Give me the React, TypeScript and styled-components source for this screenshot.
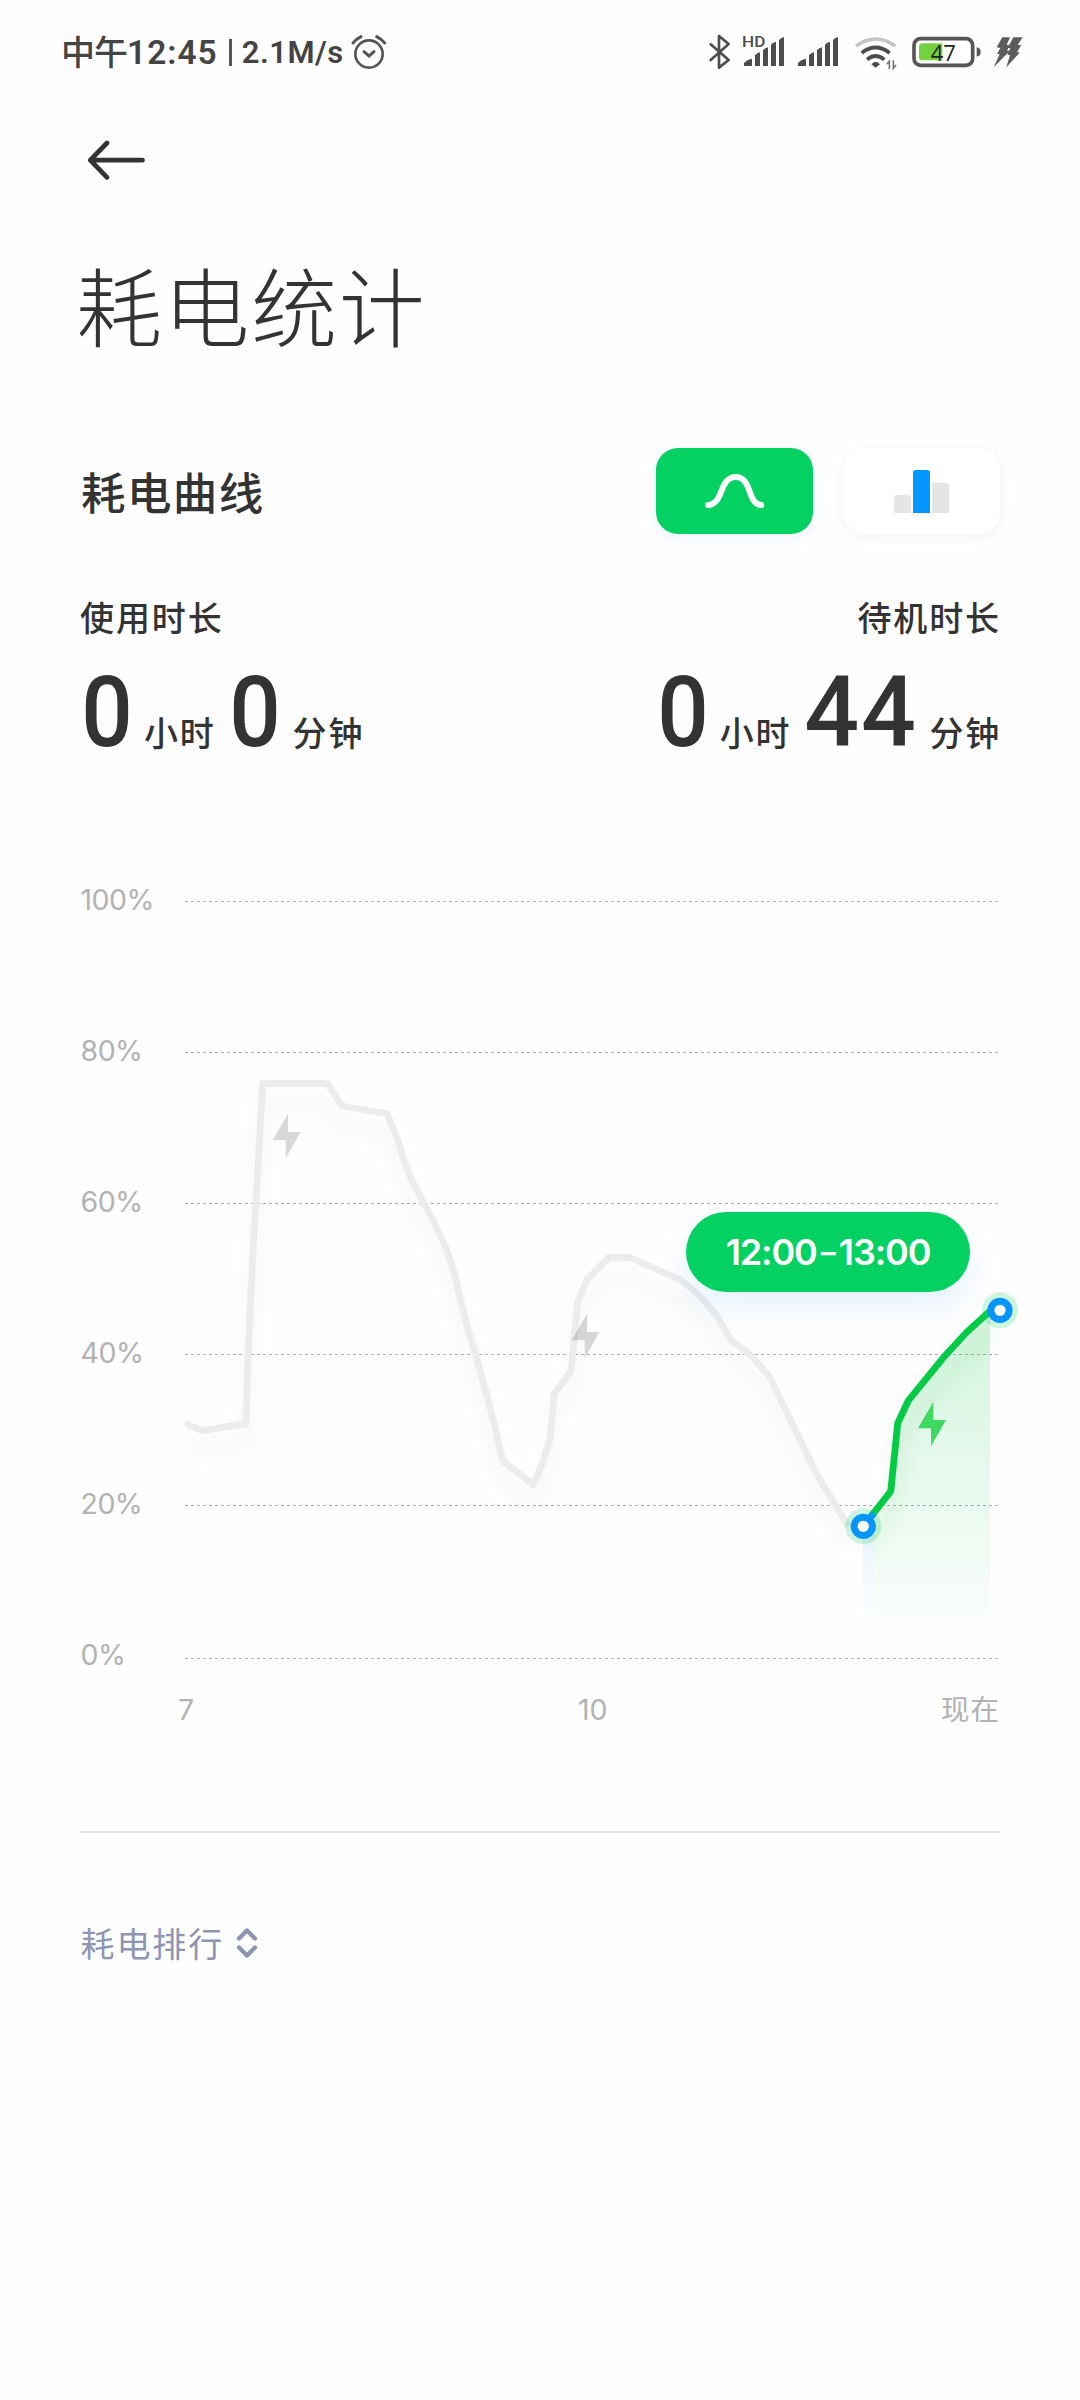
import React from "react";
import styled, { createGlobalStyle } from "styled-components";

const CJK = `"Noto Sans CJK SC", sans-serif`;

const GlobalStyle = createGlobalStyle`
  *, *::before, *::after { box-sizing: border-box; }
  body { margin: 0; background: #fefefe; }
`;

const Screen = styled.main`
  display: flex;
  flex-direction: column;
  width: 1080px;
  height: 2400px;
  overflow: hidden;
  background: #fefefe;
  color: #333;
  font-family: Roboto, ${CJK};
`;

const StatusBar = styled.header`
  display: flex;
  justify-content: space-between;
  height: 104px;
  padding: 34px 57.5px 0 61px;
`;

const StatusGroup = styled.div`
  display: flex;
  align-items: center;
  height: 36px;
  color: #444;
`;

const StatusText = styled.span<{ $size: number; $spacing?: number }>`
  padding-top: 1px;
  font: 600 ${(p) => p.$size}px/36px Roboto, ${CJK};
  letter-spacing: ${(p) => p.$spacing ?? 0}px;
  white-space: nowrap;
`;

const StatusDaypart = styled.span`
  height: 38px;
  font: 500 34px/36px ${CJK};
  letter-spacing: -1px;
`;

const Separator = styled.span`
  width: 3px;
  height: 27px;
  margin: 0 10px 0 11px;
  background: #555;
`;

const Glyph = styled.svg<{ $w: number; $h: number; $ml?: number }>`
  flex: none;
  display: block;
  width: ${(p) => p.$w}px;
  height: ${(p) => p.$h}px;
  margin-left: ${(p) => p.$ml ?? 0}px;
  overflow: visible;
`;

const BackButton = styled.button`
  display: flex;
  align-items: center;
  width: 80px;
  height: 112px;
  margin-left: 87px;
  padding: 0;
  border: 0;
  background: none;
`;

const Title = styled.h1`
  height: 130px;
  margin: 23px 0 0 76px;
  font: 300 86px/130px ${CJK};
  letter-spacing: 1.6px;
`;

const SectionHead = styled.section`
  display: flex;
  align-items: center;
  height: 86px;
  margin: 79px 80px 0;
`;

const SectionTitle = styled.h2`
  flex: 1;
  height: 88px;
  margin: 0;
  padding-left: 1px;
  font: 500 44.5px/88px ${CJK};
  letter-spacing: 1.4px;
`;

const ModeButton = styled.button<{ $active?: boolean }>`
  display: flex;
  align-items: center;
  justify-content: center;
  width: 157px;
  height: 86px;
  margin-left: 30px;
  padding: 0;
  border: 0;
  border-radius: 22px;
  background: ${(p) => (p.$active ? "#03d162" : "#fff")};
  box-shadow: ${(p) =>
    p.$active ? "0 4px 16px rgba(0, 140, 255, 0.08)" : "0 3px 14px rgba(0, 0, 0, 0.05)"};
`;

const Stats = styled.section`
  display: flex;
  justify-content: space-between;
  margin: 58px 80px 0;
`;

const Stat = styled.div<{ $right?: boolean }>`
  display: flex;
  flex-direction: column;
  align-items: ${(p) => (p.$right ? "flex-end" : "flex-start")};
`;

const StatLabel = styled.span`
  height: 50px;
  font: 500 34px/50px ${CJK};
  letter-spacing: 1.9px;
  margin-right: -1px;
`;

const StatValue = styled.div`
  display: flex;
  align-items: baseline;
  height: 108px;
  margin-top: 16px;
`;

const Big = styled.span<{ $ml?: number; $stretch: number; $spacing?: number }>`
  display: inline-block;
  margin-left: ${(p) => p.$ml ?? 0}px;
  font: 500 98.5px/110px Roboto, sans-serif;
  letter-spacing: ${(p) => p.$spacing ?? 0}px;
  transform: scaleX(${(p) => p.$stretch});
`;

const Unit = styled.span<{ $ml?: number }>`
  margin-left: ${(p) => p.$ml ?? 8}px;
  font: 500 34px/50px ${CJK};
  letter-spacing: 1.8px;
  margin-right: -1px;
`;

const Chart = styled.section`
  position: relative;
  display: grid;
  grid-template-columns: 105px 1fr;
  width: 944px;
  height: 836px;
  margin: 58px 0 0 80px;
`;

const YAxis = styled.div`
  display: flex;
  flex-direction: column;
`;

const YLabel = styled.span`
  height: 151px;
  padding-left: 0.5px;
  font: 400 28.5px/151px Inter, sans-serif;
  letter-spacing: -0.5px;
  color: #b2b2b2;
`;

const Plot = styled.svg`
  display: block;
  width: 839px;
  height: 836px;
  overflow: visible;
`;

const Tooltip = styled.div`
  position: absolute;
  left: 606px;
  top: 388px;
  display: flex;
  align-items: center;
  justify-content: center;
  width: 284px;
  height: 80px;
  border-radius: 40px;
  background: #03d162;
  box-shadow: 0 16px 32px rgba(0, 140, 255, 0.1);
  color: #fff;
  font: 600 36px/80px Inter, sans-serif;
  letter-spacing: -1.1px;
  white-space: nowrap;
`;

const RangeDash = styled.span`
  margin: 0 3px 0 4px;
  letter-spacing: 0;
  font-size: 30px;
`;

const XAxis = styled.div`
  display: flex;
  height: 44px;
  margin: 28px 80px 0 178px;
  color: #b2b2b2;
  font: 400 28.5px/44px Inter, ${CJK};
`;

const XTick = styled.span<{ $width?: number }>`
  flex: ${(p) => (p.$width ? `0 0 ${p.$width}px` : "1")};
  text-align: ${(p) => (p.$width ? "left" : "right")};
  letter-spacing: ${(p) => (p.$width ? 0 : 1)}px;
`;

const Divider = styled.hr`
  width: 920px;
  height: 2px;
  margin: 99px 0 0 80px;
  border: 0;
  background: #e4e6e6;
`;

const Ranking = styled.button`
  display: flex;
  align-items: center;
  height: 50px;
  margin: 85px 0 0 80.5px;
  padding: 0;
  border: 0;
  background: none;
  color: #8e95b3;
  font: 400 34px/50px ${CJK};
  letter-spacing: 1.9px;
`;

const AlarmIcon = () => (
  <Glyph $w={36} $h={36} $ml={7} viewBox="930 42 108 108" fill="none" stroke="#555" strokeLinecap="round">
    <circle cx="984" cy="102" r="41" strokeWidth="8" />
    <path d="M969 95l15 13 15-13" strokeWidth="9" />
    <path d="M936 69q10-12 24-19M1031 69q-10-12-24-19" strokeWidth="9" />
  </Glyph>
);

const BluetoothIcon = () => (
  <Glyph $w={22} $h={36} viewBox="57 42 66 108" fill="none" stroke="#4c4c4c" strokeWidth="8" strokeLinejoin="round" strokeLinecap="round">
    <path d="M62 73L116 120 87 143V48L116 72 62 120" />
  </Glyph>
);

const SignalIcon = ({ hd, ml }: { hd?: boolean; ml: number }) => (
  <Glyph $w={42} $h={36} $ml={ml} viewBox="159 42 126 108" fill="#4c4c4c">
    {hd && (
      <text x="156" y="81" fontFamily="Roboto, sans-serif" fontSize="46" fontWeight="500" textLength="70" lengthAdjust="spacingAndGlyphs">
        HD
      </text>
    )}
    <path d="M162 138v-8q6-10 24-14v22zM195 138v-32q4-6 15-9v41zM219 138v-47q4-6 15-9v56zM243 138v-64q4-6 15-9v73zM267 138v-78q4-6 15-9v87z" />
  </Glyph>
);

const WifiIcon = () => (
  <Glyph $w={43} $h={36} $ml={14.5} viewBox="490 42 129 108" fill="none" strokeWidth="11">
    <path d="M496 78Q555 36 614 78" stroke="#c4c4c4" />
    <path d="M513 99Q555 66 597 99M529 119Q555 97 581 119" stroke="#4c4c4c" />
    <path d="M542 133Q555 117 568 133L555 143z" fill="#4c4c4c" />
    <path d="M596 147V124l-7 9M608 121v24l8-10" stroke="#777" strokeWidth="5" />
  </Glyph>
);

const BatteryIcon = () => (
  <Glyph $w={69} $h={36} $ml={15.5} viewBox="665 42 207 108">
    <rect x="671" y="56" width="176" height="80" rx="20" fill="#fff" stroke="#555" strokeWidth="11" />
    <path d="M697 70h59v51h-59q-11 0-11-11V81q0-11 11-11z" fill="#74d13f" />
    <path d="M859 82q12 2 12 14t-12 14z" fill="#555" />
    <text x="759" y="122" textAnchor="middle" fontFamily="'Open Sans', sans-serif" fontSize="66" fill="#222">
      <tspan fontWeight="500">4</tspan>
      <tspan fontWeight="400">7</tspan>
    </text>
  </Glyph>
);

const ChargeIcon = () => (
  <Glyph $w={30} $h={36} $ml={11.5} viewBox="907 42 90 108" fill="#5c5c5c">
    <path d="M935 52H958L948 75H957L948 95H955L909 142 927 102H919L929 84 918 82zM968 52H996L981 75H992L979 97H988L947 142 958 105H950L959 85 951 83z" />
    <path d="M948 75h20v7h-20zM944 92h20v7h-20z" />
  </Glyph>
);

const BOLT = "M15.3 0V18H28L13 44.3V26.3H0z";

const grayLine =
  "M185 1423.6L202.3 1430.7 246 1423.6 248 1356 252.7 1257 262.7 1083.5H327.3L342 1106 387 1113.6 396.7 1137 403.3 1158.6 411.7 1180.4 431.7 1218 445 1245.6 453.3 1269.4 466.7 1324.7 476.7 1358.3 493.3 1419.6 502.7 1461 533.3 1484.5 543.3 1461 550 1439.2 554.3 1393.8 571 1371.4 577.7 1302 586.7 1280 609 1257.5H630L681.7 1280.4 698.3 1294.3 716.7 1315.7 730.7 1340 751.7 1356 770 1377.5 815 1471 848 1526";

const greenPoints =
  "863.3 1526.3L890.7 1491.3 893.3 1466.7 897.7 1423.3 908.3 1400.7 945 1355.7 966.7 1332.3 990 1311";

const gridLines = [901.5, 1052.5, 1203.5, 1354.5, 1505.5, 1658.5];

const Marker = ({ x, y }: { x: number; y: number }) => (
  <g transform={`translate(${x} ${y})`}>
    <circle r="18" fill="#04d162" fillOpacity="0.2" />
    <circle r="12.6" fill="#0795fd" />
    <circle r="5.6" fill="#fff" />
  </g>
);

const BatteryPlot = () => (
  <Plot viewBox="185 824 839 836">
    <defs>
      <linearGradient id="charge" gradientUnits="userSpaceOnUse" x1="0" x2="0" y1="1311" y2="1652">
        <stop offset="0" stopColor="#04c846" stopOpacity="0.18" />
        <stop offset="1" stopColor="#04c846" stopOpacity="0" />
      </linearGradient>
      <linearGradient id="edge" gradientUnits="userSpaceOnUse" x1="0" x2="0" y1="1511" y2="1630">
        <stop offset="0" stopColor="#0795fd" stopOpacity="0.1" />
        <stop offset="1" stopColor="#0795fd" stopOpacity="0" />
      </linearGradient>
      <filter id="soft" filterUnits="userSpaceOnUse" x="150" y="1040" width="900" height="560">
        <feGaussianBlur stdDeviation="8" />
      </filter>
      <clipPath id="right">
        <rect x="185" y="1040" width="840" height="640" />
      </clipPath>
      <clipPath id="chargeSpan">
        <rect x="863" y="1290" width="127" height="370" />
      </clipPath>
    </defs>
    {gridLines.map((y) => (
      <line key={y} x1="185" x2="998" y1={y} y2={y} stroke="#acacac" strokeDasharray="3 3" />
    ))}
    <g clipPath="url(#right)" fill="none" strokeLinejoin="round">
      <path d={grayLine} transform="translate(0 20)" stroke="#000" strokeOpacity="0.035" strokeWidth="9" filter="url(#soft)" />
      <path d={grayLine} stroke="#ececec" strokeWidth="6.8" />
    </g>
    <g clipPath="url(#chargeSpan)">
      <path d="M874 1513L890.7 1491.3 893.3 1466.7 897.7 1423.3 908.3 1400.7 945 1355.7 966.7 1332.3 990 1311V1652H874z" fill="url(#charge)" />
      <path d="M863 1526L874 1513V1650H863z" fill="url(#edge)" />
    </g>
    <path d={`M${greenPoints}`} transform="translate(2 20)" fill="none" stroke="#04a83c" strokeOpacity="0.1" strokeWidth="9" filter="url(#soft)" />
    <path d={`M${greenPoints}`} fill="none" stroke="#04cb46" strokeWidth="6.8" strokeLinejoin="round" />
    <path d="M863.3 1526.3L874 1513" stroke="#0795fd" strokeWidth="6.8" />
    <path d={BOLT} transform="translate(272.7 1114)" fill="#000" fillOpacity="0.15" />
    <path d={BOLT} transform="translate(571.7 1314)" fill="#000" fillOpacity="0.15" />
    <path d={BOLT} transform="translate(918 1402)" fill="#40d960" />
    <Marker x={863.3} y={1526.3} />
    <Marker x={1000} y={1310.3} />
  </Plot>
);

export default function App() {
  return (
    <Screen>
      <GlobalStyle />
      <StatusBar>
        <StatusGroup>
          <StatusDaypart>中午</StatusDaypart>
          <StatusText $size={33.5} $spacing={1}>12:45</StatusText>
          <Separator />
          <StatusText $size={31} $spacing={0.5}>2.1M/s</StatusText>
          <AlarmIcon />
        </StatusGroup>
        <StatusGroup>
          <BluetoothIcon />
          <SignalIcon hd ml={12} />
          <SignalIcon ml={12} />
          <WifiIcon />
          <BatteryIcon />
          <ChargeIcon />
        </StatusGroup>
      </StatusBar>

      <BackButton aria-label="返回">
        <Glyph $w={58} $h={40} viewBox="0 0 58 40" fill="none" stroke="#333" strokeWidth="4.8" strokeLinecap="round" strokeLinejoin="round">
          <path d="M20 3L3.3 20.2 20 37.4M3.3 20.2H55.5" />
        </Glyph>
      </BackButton>

      <Title>耗电统计</Title>

      <SectionHead>
        <SectionTitle>耗电曲线</SectionTitle>
        <ModeButton $active aria-label="曲线">
          <Glyph $w={60} $h={36} viewBox="194 129 180 108" fill="none" stroke="#fff" strokeWidth="18" strokeLinecap="round">
            <path d="M204 225C250 223 236 141 286 141S320 223 363 225" />
          </Glyph>
        </ModeButton>
        <ModeButton aria-label="柱状图">
          <Glyph $w={55} $h={43} viewBox="762 120 165 129">
            <path d="M762 249v-46q0-8 8-8h35q8 0 8 8v46zM876 249v-82q0-8 8-8h35q8 0 8 8v82z" fill="#e5e5e5" />
            <path d="M819 249V128q0-8 8-8h35q8 0 8 8v121z" fill="#0597ff" />
          </Glyph>
        </ModeButton>
      </SectionHead>

      <Stats>
        <Stat>
          <StatLabel>使用时长</StatLabel>
          <StatValue>
            <Big $ml={-1.5} $stretch={0.92}>0</Big>
            <Unit $ml={9.5}>小时</Unit>
            <Big $ml={12} $stretch={0.92}>0</Big>
            <Unit $ml={10}>分钟</Unit>
          </StatValue>
        </Stat>
        <Stat $right>
          <StatLabel>待机时长</StatLabel>
          <StatValue>
            <Big $stretch={0.92}>0</Big>
            <Unit $ml={9}>小时</Unit>
            <Big $ml={13} $stretch={0.98} $spacing={2}>44</Big>
            <Unit $ml={10}>分钟</Unit>
          </StatValue>
        </Stat>
      </Stats>

      <Chart>
        <YAxis>
          {["100%", "80%", "60%", "40%", "20%", "0%"].map((t) => (
            <YLabel key={t}>{t}</YLabel>
          ))}
        </YAxis>
        <BatteryPlot />
        <Tooltip>
          12:00<RangeDash>–</RangeDash>13:00
        </Tooltip>
      </Chart>
      <XAxis>
        <XTick $width={400}>7</XTick>
        <XTick $width={60}>10</XTick>
        <XTick>现在</XTick>
      </XAxis>

      <Divider />

      <Ranking>
        耗电排行
        <Glyph $w={22} $h={32} $ml={12} viewBox="0 0 22 32" fill="none" stroke="#8e95b3" strokeWidth="4.4" strokeLinecap="round" strokeLinejoin="round">
          <path d="M3 11.5L11 3.5 19 11.5M3 20.5L11 28.5 19 20.5" />
        </Glyph>
      </Ranking>
    </Screen>
  );
}
